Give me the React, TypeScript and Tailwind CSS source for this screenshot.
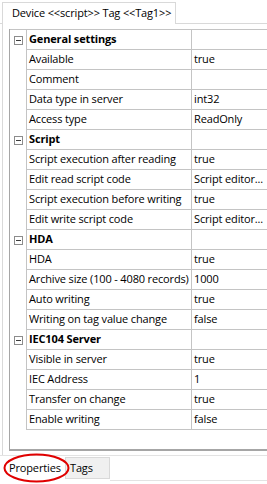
import React from "react";

type Row = { name: string; value?: string; group?: boolean };

const rows: Row[] = [
  { name: "General settings", group: true },
  { name: "Available", value: "true" },
  { name: "Comment", value: "" },
  { name: "Data type in server", value: "int32" },
  { name: "Access type", value: "ReadOnly" },
  { name: "Script", group: true },
  { name: "Script execution after reading", value: "true" },
  { name: "Edit read script code", value: "Script editor..." },
  { name: "Script execution before writing", value: "true" },
  { name: "Edit write script code", value: "Script editor..." },
  { name: "HDA", group: true },
  { name: "HDA", value: "true" },
  { name: "Archive size (100 - 4080 records)", value: "1000" },
  { name: "Auto writing", value: "true" },
  { name: "Writing on tag value change", value: "false" },
  { name: "IEC104 Server", group: true },
  { name: "Visible in server", value: "true" },
  { name: "IEC Address", value: "1" },
  { name: "Transfer on change", value: "true" },
  { name: "Enable writing", value: "false" },
];

function Minus() {
  return (
    <div className="w-[9px] h-[9px] border border-[#8c8c8c] bg-white flex items-center justify-center">
      <div className="w-[5px] h-[1px] bg-[#3c3c3c]" />
    </div>
  );
}

export default function App() {
  return (
    <div
      className="w-[267px] h-[484px] bg-white overflow-hidden flex flex-col text-[11px] text-black relative tracking-[-0.15px]"
      style={{ fontFamily: '"Open Sans", "Noto Sans", sans-serif' }}
    >
      {/* top tab */}
      <div className="h-[24px] flex items-end shrink-0">
        <div className="w-[2px] h-full border-b border-[#d9d9d9]" />
        <div className="w-[174px] h-[22px] border border-b-0 border-[#d9d9d9] flex items-center pl-[9px] whitespace-nowrap">
          Device &lt;&lt;script&gt;&gt; Tag &lt;&lt;Tag1&gt;&gt;
        </div>
        <div className="flex-1 h-full border-b border-[#d9d9d9]" />
      </div>

      {/* panel */}
      <div className="ml-[2px] border-l border-[#d9d9d9] h-[431px] shrink-0 pt-[5px] pl-[6px]">
        <div className="h-[422px] border-l border-b-2 border-[#a6a6a6] flex flex-col">
          <div className="border-t border-[#c4c4c4]">
            {rows.map((r, i) => (
              <div key={i} className="flex h-[20px]">
                <div className="w-[17px] shrink-0 border-r border-[#c4c4c4] flex items-center justify-center">
                  {r.group && <Minus />}
                </div>
                <div
                  className={`w-[165px] shrink-0 border-r border-b border-[#c4c4c4] flex items-center pl-[2px] whitespace-nowrap overflow-hidden ${
                    r.group ? "font-bold" : ""
                  }`}
                >
                  {r.name}
                </div>
                <div className="flex-1 border-b border-[#c4c4c4] flex items-center pl-[2px] whitespace-nowrap overflow-hidden">
                  {r.value}
                </div>
              </div>
            ))}
          </div>
        </div>
      </div>

      {/* bottom tabs */}
      <div className="border-t border-[#e3e3e3] h-[26px] shrink-0 flex items-start relative">
        <div className="w-[2px]" />
        <div className="w-[63px] h-[25px] bg-white flex items-center pl-[7px]">
          Properties
        </div>
        <div className="w-[45px] h-[22px] mt-[1px] bg-[#f0f0f0] border border-[#d9d9d9] flex items-center pl-[4px]">
          Tags
        </div>
        <div className="flex-1 h-[25px] border-b border-[#e3e3e3]" />
      </div>

      {/* red ellipse */}
      <svg className="absolute left-[3px] top-[453px]" width="67" height="30" viewBox="0 0 67 30">
        <ellipse cx="33.5" cy="15" rx="32" ry="13.5" fill="none" stroke="#e00000" strokeWidth="2" />
      </svg>
    </div>
  );
}
